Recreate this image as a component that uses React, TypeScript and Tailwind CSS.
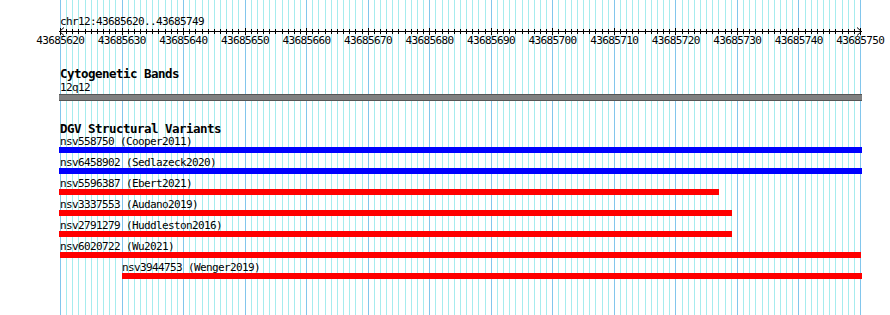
import React from "react";

const X0 = 60;
const PXBP = 800 / 130;
const xAt = (bp: number) => X0 + bp * PXBP;

const MONO = "font-['DejaVu_Sans_Mono',monospace]";

type Feat = { name: string; src: string; start: number; end: number; color: string; labelX: number };

const feats: Feat[] = [
  { name: "nsv558750", src: "Cooper2011", start: 59, end: 862, color: "bg-[#0000ff]", labelX: 60 },
  { name: "nsv6458902", src: "Sedlazeck2020", start: 59, end: 862, color: "bg-[#0000ff]", labelX: 60 },
  { name: "nsv5596387", src: "Ebert2021", start: 59, end: 719, color: "bg-[#ff0000]", labelX: 60 },
  { name: "nsv3337553", src: "Audano2019", start: 59, end: 732, color: "bg-[#ff0000]", labelX: 60 },
  { name: "nsv2791279", src: "Huddleston2016", start: 59, end: 732, color: "bg-[#ff0000]", labelX: 60 },
  { name: "nsv6020722", src: "Wu2021", start: 60, end: 861, color: "bg-[#ff0000]", labelX: 60 },
  { name: "nsv3944753", src: "Wenger2019", start: 122, end: 862, color: "bg-[#ff0000]", labelX: 122 },
];

function Grid() {
  const lines = [];
  for (let i = 0; i <= 130; i++) {
    const x = Math.round(xAt(i)) + 0.5;
    lines.push(
      <line
        key={i}
        x1={x}
        x2={x}
        y1={0}
        y2={315}
        stroke={i % 10 === 0 ? "#82c6ec" : "#a6ecee"}
        strokeWidth={1}
      />
    );
  }
  return (
    <svg className="absolute inset-0" width={890} height={315} shapeRendering="crispEdges">
      {lines}
    </svg>
  );
}

function Ruler() {
  const ticks = [];
  for (let i = 0; i <= 130; i++) {
    const x = Math.round(xAt(i)) + 0.5;
    const major = i % 10 === 0;
    ticks.push(<line key={i} x1={x} x2={x} y1={major ? 1 : 2} y2={major ? 8 : 7} stroke="#000" />);
  }
  const labels = [];
  for (let k = 0; k <= 13; k++) {
    labels.push(
      <text
        key={k}
        x={xAt(k * 10) + 0.3}
        y={17}
        textAnchor="middle"
        fontSize={11}
        letterSpacing={-0.62}
        fontFamily="'DejaVu Sans Mono', monospace"
        fill="#000"
      >
        {43685620 + k * 10}
      </text>
    );
  }
  return (
    <svg width={890} height={20} className="block">
      <g shapeRendering="crispEdges">
        <line x1={59} x2={862} y1={4.5} y2={4.5} stroke="#000" />
        {ticks}
      </g>
      <polyline points="64,0.5 59.5,4.5 64,8.5" fill="none" stroke="#000" />
      <polyline points="857,0.5 861.5,4.5 857,8.5" fill="none" stroke="#000" />
      {labels}
    </svg>
  );
}

function FeatureRow({ f }: { f: Feat }) {
  return (
    <div className="flex flex-col">
      <div
        className="h-[11px] text-[11px] tracking-[-0.62px] leading-[11px] whitespace-pre text-black"
        style={{ paddingLeft: f.labelX }}
      >
        {`${f.name} (${f.src})`}
      </div>
      <div className={`h-[6px] ${f.color}`} style={{ marginLeft: f.start, width: f.end - f.start }} />
    </div>
  );
}

export default function App() {
  return (
    <div className={`relative w-[890px] h-[315px] bg-white overflow-hidden ${MONO}`}>
      <Grid />
      <div className="relative flex flex-col">
        <div className="pt-[16px] pl-[60px] h-[27px] text-[11px] tracking-[-0.62px] leading-[11px] text-black">
          chr12:43685620..43685749
        </div>
        <Ruler />
        <div className="mt-[20px] pl-[60px] h-[13px] text-[12.5px] tracking-[-0.52px] leading-[13px] font-bold text-black whitespace-pre">
          Cytogenetic Bands
        </div>
        <div className="pt-[2px] pl-[60px] h-[13px] text-[11px] tracking-[-0.62px] leading-[11px] text-black">12q12</div>
        <div className="mt-[1px] ml-[59px] w-[803px] h-[7px] bg-[#808080] border-y border-[#555555]" />
        <div className="mt-[21px] pl-[60px] h-[13px] text-[12.5px] tracking-[-0.52px] leading-[13px] font-bold text-black whitespace-pre">
          DGV Structural Variants
        </div>
        <div className="mt-[1px] flex flex-col gap-[4px]">
          {feats.map((f) => (
            <FeatureRow key={f.name} f={f} />
          ))}
        </div>
      </div>
    </div>
  );
}
